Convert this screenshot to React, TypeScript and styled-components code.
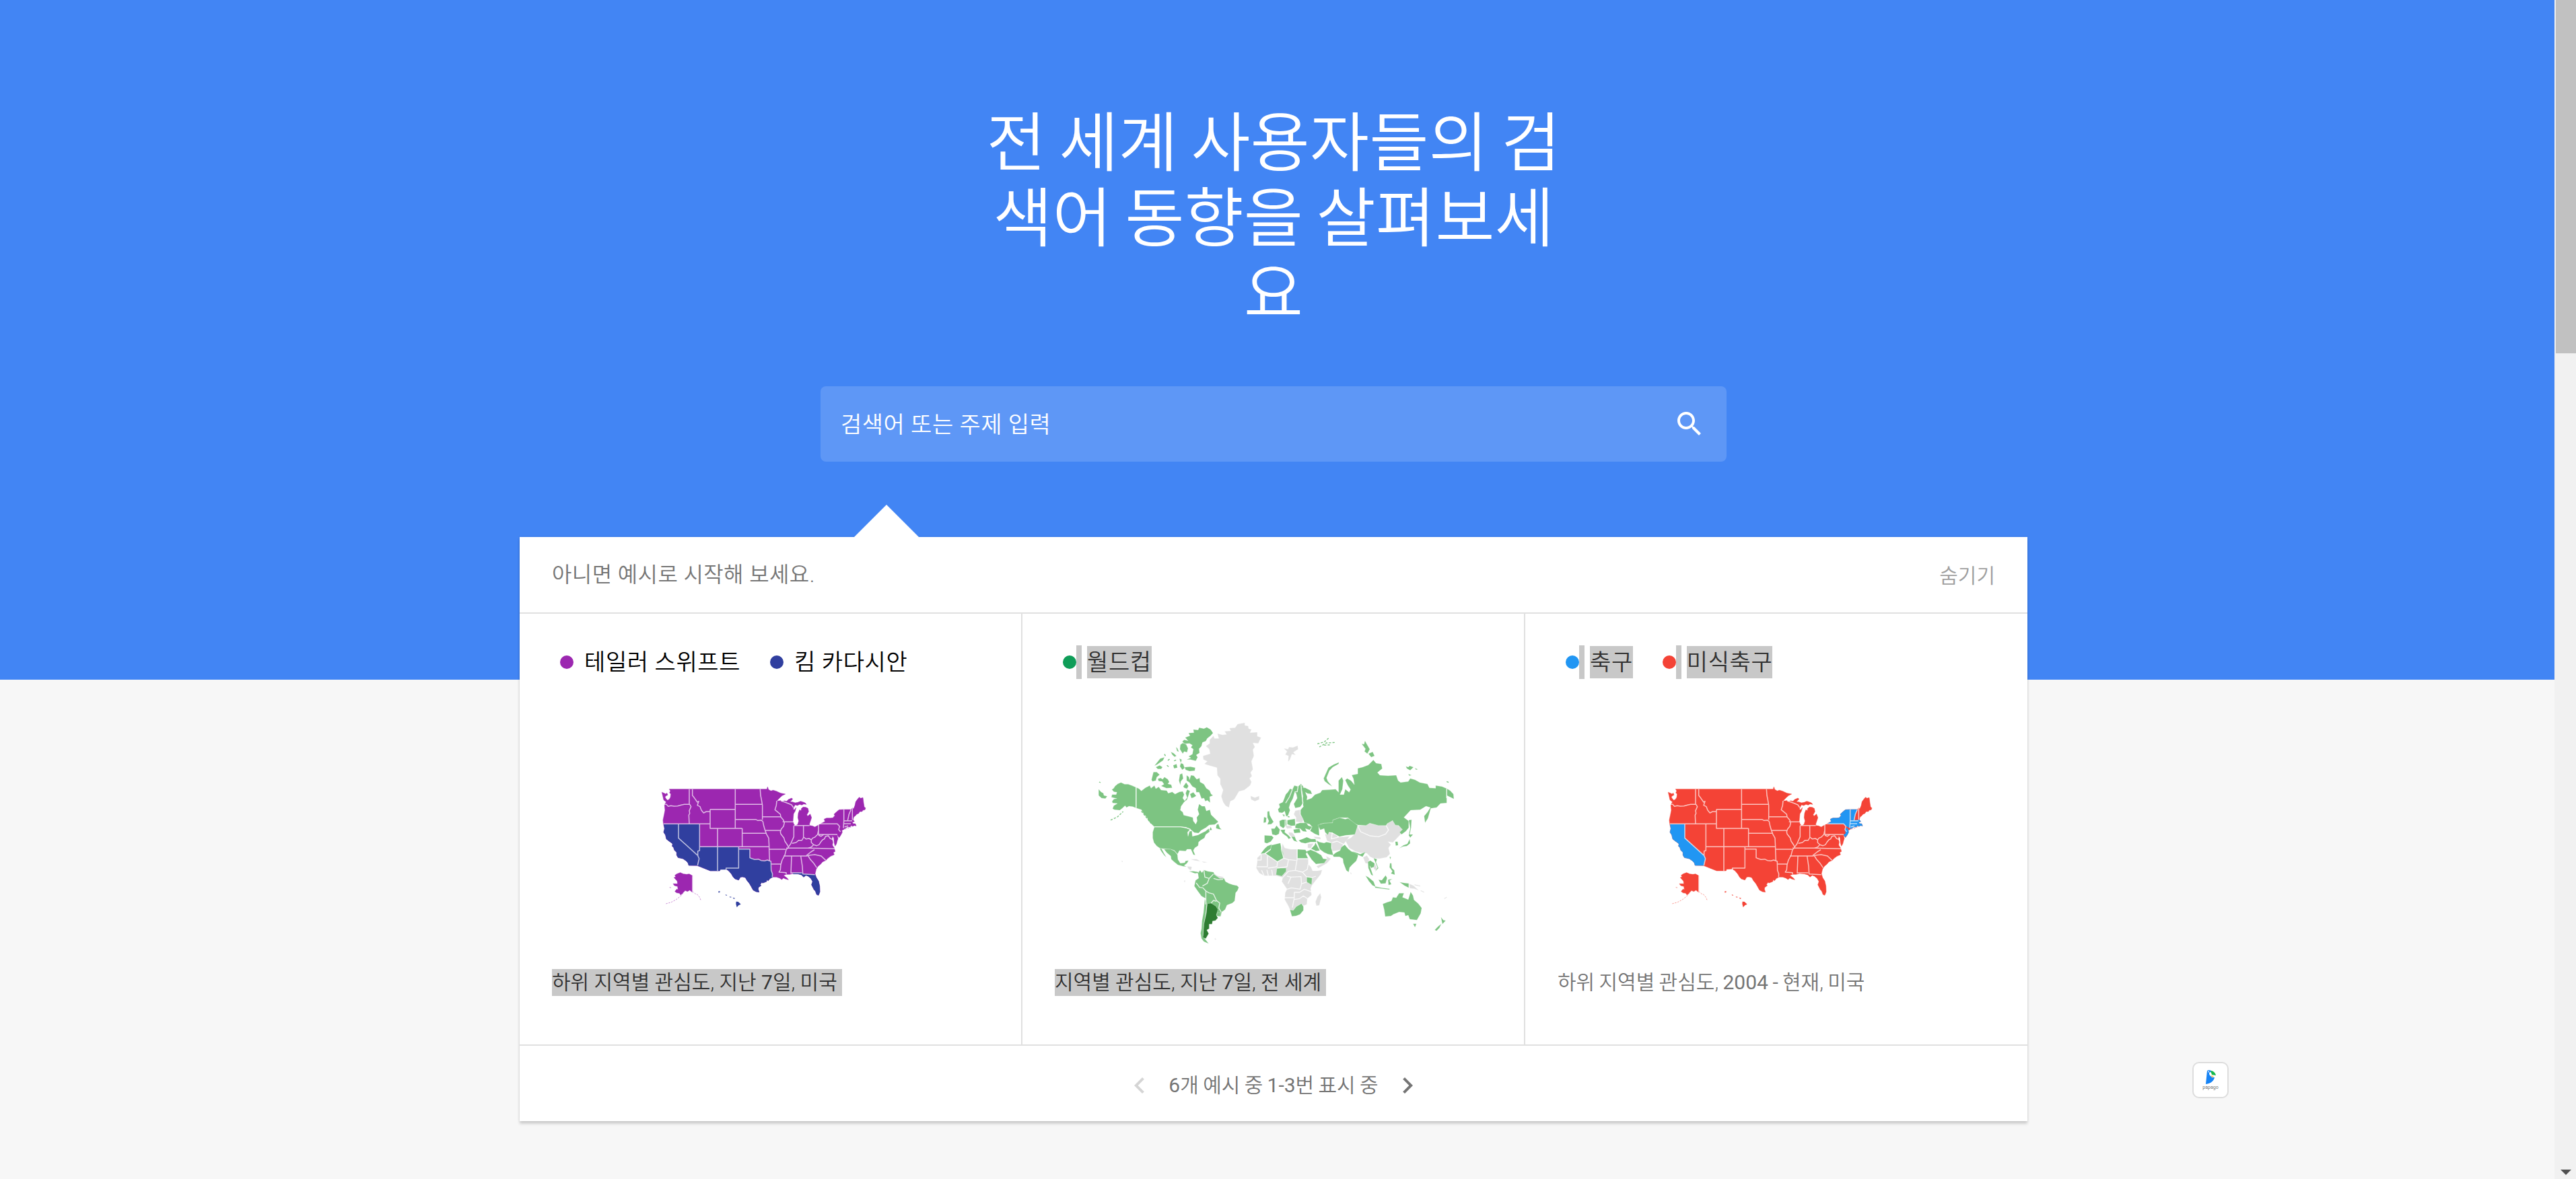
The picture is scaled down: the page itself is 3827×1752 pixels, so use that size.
import React from "react";
import styled, { createGlobalStyle } from "styled-components";

const Global = createGlobalStyle`
  * { box-sizing: border-box; }
  html, body { margin: 0; padding: 0; overflow: hidden; background: #f7f7f7; }
  body { font-family: Roboto, "Noto Sans CJK KR", sans-serif; font-weight: 350; color: #000; }
  button { font: inherit; border: 0; padding: 0; background: none; }
`;

const Screen = styled.div`
  display: flex;
  width: 3827px;
  height: 1752px;
  overflow: hidden;
`;

const Page = styled.main`
  position: relative;
  width: 3795px;
  height: 1752px;
  padding-right: 11px;
  display: flex;
  flex-direction: column;
  align-items: center;
  background: linear-gradient(#4285f4 1010px, #f7f7f7 1010px);
`;

const Title = styled.h1`
  width: 896px;
  height: 336px;
  margin: 157px 0 81px;
  font-size: 96px;
  font-weight: 350;
  line-height: 112px;
  word-spacing: -4px;
  text-align: center;
  color: #fff;
`;

const SearchBox = styled.div`
  width: 1346px;
  height: 112px;
  padding: 0 31px 0 30px;
  display: flex;
  align-items: center;
  justify-content: space-between;
  border-radius: 8px;
  background: #5e97f6;
  color: #fff;
`;

const Placeholder = styled.span`
  margin-top: -4px;
  font-size: 34px;
  letter-spacing: 0.5px;
`;

const Pointer = styled.div`
  width: 96px;
  height: 48px;
  margin-top: 64px;
  margin-left: -1150px;
  background: #fff;
  clip-path: polygon(50% 0, 100% 100%, 0 100%);
`;

const Card = styled.section`
  width: 2240px;
  height: 868px;
  display: flex;
  flex-direction: column;
  background: #fff;
  box-shadow: 0 4px 4px rgba(0, 0, 0, 0.16), 0 0 4px rgba(0, 0, 0, 0.08);
`;

const CardHeader = styled.header`
  height: 114px;
  padding: 0 48px 6px;
  display: flex;
  align-items: center;
  justify-content: space-between;
  border-bottom: 2px solid #e0e0e0;
  font-size: 32px;
  letter-spacing: 0.4px;
  color: #757575;
`;

const HideButton = styled.button`
  margin-top: 4px;
  font-size: 30px;
  color: #9e9e9e;
`;

const Columns = styled.div`
  flex: 1;
  display: grid;
  grid-template-columns: 747px 747px 746px;
`;

const Example = styled.article`
  padding: 46px 48px 0;
  display: flex;
  flex-direction: column;
  border-right: 2px solid #e0e0e0;
  &:last-child { border-right: 0; }
`;

const Legend = styled.div`
  height: 52px;
  padding-left: 12px;
  display: flex;
  align-items: center;
  gap: 44px;
`;

const LegendItem = styled.div`
  display: flex;
  align-items: center;
`;

const Dot = styled.i<{ $color: string }>`
  width: 20px;
  height: 20px;
  border-radius: 50%;
  background: ${(p) => p.$color};
`;

const Gap = styled.i<{ $selected?: boolean }>`
  width: 8px;
  height: 50px;
  margin-right: 8px;
  background: ${(p) => (p.$selected ? "#c8c8c8" : "transparent")};
`;

const Term = styled.span<{ $selected?: boolean }>`
  height: 48px;
  line-height: 48px;
  font-size: 34px;
  letter-spacing: 0.6px;
  white-space: nowrap;
  color: ${(p) => (p.$selected ? "#323232" : "#000")};
  background: ${(p) => (p.$selected ? "#c8c8c8" : "transparent")};
`;

const MapFrame = styled.div<{ $top: number; $left: number }>`
  height: 430px;
  margin: 0 -48px;
  padding: ${(p) => p.$top}px 0 0 ${(p) => p.$left}px;
`;

const Caption = styled.p<{ $selected?: boolean }>`
  align-self: flex-start;
  height: 40px;
  margin: 0;
  line-height: 40px;
  font-size: 30px;
  word-spacing: ${(p) => (p.$selected ? "0" : "-1px")};
  white-space: pre;
  color: ${(p) => (p.$selected ? "#323232" : "#757575")};
  background: ${(p) => (p.$selected ? "#c8c8c8" : "transparent")};
`;

const Digits = styled.span`
  font-weight: 400;
`;

const Pager = styled.footer`
  height: 114px;
  display: flex;
  align-items: center;
  justify-content: center;
  gap: 19px;
  border-top: 2px solid #e0e0e0;
  font-size: 30px;
  word-spacing: -1px;
  color: #757575;
  svg { margin-top: 6px; }
`;

const Papago = styled.div`
  position: absolute;
  left: 3257px;
  top: 1578px;
  width: 54px;
  height: 54px;
  border: 2px solid #ddd;
  border-radius: 10px;
  background: #fff;
  display: flex;
  flex-direction: column;
  align-items: center;
  padding-top: 10px;
`;

const PapagoName = styled.span`
  font-size: 7px;
  font-weight: 400;
  line-height: 8px;
  color: #777;
`;

const Scrollbar = styled.div`
  width: 32px;
  height: 1752px;
  padding-left: 2px;
  display: flex;
  flex-direction: column;
  justify-content: space-between;
  background: #f1f1f1;
`;

const Thumb = styled.div`
  height: 525px;
  background: #c1c1c1;
`;

const ArrowDown = styled.div`
  width: 16px;
  height: 8px;
  margin: 0 0 6px 7px;
  background: #505050;
  clip-path: polygon(0 0, 100% 0, 50% 100%);
`;

const US_COAST = [
  "70,82 80,86 88,90 92,85 96,94 88,98 84,103 88,110 95,118 102,114 108,105 110,90 104,84 108,76 103,68 538,68 541,58 545,70 556,76 566,73 580,77 590,82 600,86 620,90 606,97 598,104 588,114 582,121 592,120 600,119 606,123 616,120 626,122 634,114 648,108 653,112 646,120 641,124 652,125 664,129 676,127 688,122 698,125 708,129 714,136 702,134 694,139 684,136 674,141 664,138 657,150 655,158 661,160 668,150 664,166 657,178 655,198 654,212 658,224 665,231 675,226 680,210 676,195 678,175 684,160 690,165 692,154 700,148 712,149 721,154 724,168 716,182 720,188 731,179 737,195 733,208 728,222 728,230 740,232 752,237 766,229 780,221 797,212 793,202 804,197 820,197 832,196 841,186 837,180 850,168 860,160 881,159 913,159 919,152 924,156 930,142 934,124 944,110 950,104 956,109 966,106 969,130 972,148 978,152 975,160 966,162 962,168 952,168 947,176 938,180 931,188 925,192 922,205 928,212 918,216 923,222 932,222 936,232 928,230 920,234 914,230 908,237 898,236 888,242 880,248 872,252 874,260 868,272 860,284 854,276 850,270 855,288 851,300 848,312 842,322 838,308 836,286 830,276 828,290 832,304 830,318 838,330 842,346 834,350 838,360 822,367 810,376 800,386 786,392 778,402 766,412 758,424 753,445 758,462 768,478 773,500 774,526 768,541 760,538 754,522 748,516 742,504 737,494 742,480 734,466 722,456 712,452 702,460 692,450 678,446 655,444 640,448 626,448 612,452 622,460 628,464 634,472 620,468 612,464 604,471 594,464 580,460 564,460 552,466 544,476 538,472 536,480 520,486 514,484 508,494 512,498 500,506 499,514 503,527 490,525 477,518 468,502 460,488 450,476 442,462 430,459 420,460 412,473 396,468 388,460 380,446 368,432 356,424 330,425 328,432 286,432 228,409 190,408 186,396 176,386 164,378 142,373 136,362 136,350 126,340 122,328 116,322 118,312 108,304 102,300 90,290 86,272 78,260 82,244 77,224 75,206 80,182 84,162 82,140 85,130 90,126 78,116 74,98",
  "206,454 206,528 194,518 184,524 174,520 164,530 154,540 148,532 136,530 128,524 136,514 142,516 140,502 126,498 120,490 140,490 138,478 124,462 132,460 128,452 136,446 152,440 166,446 180,448 192,446",
];
const US_ISLES = "M206,524l12,10 10,4 10,12 5,12M164,532l-12,14 -18,14 -22,12 -28,8M104,506l10,2M886,246l14,-4 14,-6";
const HAWAII = ["401,569 410,570 422,581 412,586 404,595 400,580", "321,524 329,523 328,529 322,529", "353,537 361,541 356,543", "371,547 382,549 374,551", "386,551 396,554 391,558"];

const CALIFORNIA = "79,225 144,225 144,286 230,364 236,378 230,392 229,408 190,408 186,396 176,386 164,378 142,373 136,362 136,350 126,340 122,328 116,322 118,312 108,304 102,300 90,290 86,272 78,260 82,244";
const NEVADA = "144,225 238,225 238,342 230,342 230,364 144,286";
const ARIZONA = "239,326 318,326 318,432 286,432 229,409 236,378 230,364 230,342 239,342";
const NEW_MEXICO = "318,326 412,326 412,420 356,420 356,426 330,426 328,432 318,432";
const TEXAS = "412,335 462,335 462,374 480,380 500,384 520,388 540,386 556,392 557,430 563,445 564,460 552,466 544,476 538,472 536,480 520,486 514,484 508,494 512,498 500,506 499,514 503,527 490,525 477,518 468,502 460,488 450,476 442,462 430,459 420,460 412,473 396,468 388,460 380,446 368,432 356,424 356,420 412,420";
const FLORIDA = "655,441 694,441 698,446 752,449 758,462 768,478 773,500 774,526 768,541 760,538 754,522 748,516 742,504 737,494 742,480 734,466 722,456 712,452 702,460 692,450 678,446 655,446";
const NEW_YORK = "797,212 793,202 804,197 820,197 832,196 841,186 837,180 850,168 860,160 882,159 882,208 880,240 872,238 862,232 852,223 780,223";
const VERMONT = "884,159 913,159 904,180 898,208 884,208";
const SOUTHERN_NE = "882,208 922,205 928,212 918,216 923,222 932,222 936,232 928,230 920,234 914,230 908,237 898,236 882,246";
const NEW_JERSEY = "862,240 872,246 874,260 868,272 860,282 852,273 862,264 858,250";

const US_BORDERS =
  "M192,68V138M80,134L90,136 98,145 110,142 124,144 140,143 156,139 170,136 194,136 200,146 192,164 194,176 190,184 192,222" +
  "M206,68V96L214,106 228,126 234,122 228,140 240,146 246,162 256,174 268,168 284,168" +
  "M77,223H285M285,158V243H428M285,158H397M397,68V243M397,136H517M508,68L510,96 514,116 518,140 518,204M397,203L488,203 498,208 512,206 520,212" +
  "M518,191H600M582,120L580,140 574,160 586,170 598,180 600,192 612,206 616,218 612,234 602,246 598,258 600,268 614,286 618,300 630,318 634,328 624,338 618,362 606,384 600,404 598,428 592,438 624,440 624,448" +
  "M520,212L524,232 530,252 536,268 546,286 548,324V336L550,386M530,252H598M428,265H536M428,243V324M318,243V432M238,225V342L230,344V364L236,378 229,408" +
  "M238,325H548M144,225V286L230,364M412,326V420H356V426M412,335H462V374L472,378 484,382 500,380 512,386 528,388 540,384 556,390 557,430 563,446 562,460M548,336H622M556,402H600" +
  "M608,214H656M600,120L618,126 634,132 648,138 656,150M658,230H728M658,232V280L650,298 644,312 634,326M701,232V282M624,331H720L842,334" +
  "M612,366H714L730,362 752,360 780,366 800,385M648,366L645,444M689,366L696,412 698,446 752,449M645,441H694M722,366L732,382 748,400 760,418M714,364L734,348 750,338" +
  "M650,310L668,306 680,296 694,296 702,282 712,290 726,288 736,294 742,286 752,282 764,270 768,250M768,223V270H852M768,223H852L862,234 858,248 866,258M736,294L736,306 746,316 736,326 720,332" +
  "M746,316L760,320 770,316 778,304 786,294 794,290 800,278 812,276 820,288 830,292M768,274L780,278 792,270M881,159V210L879,242M913,159L904,180 898,208M919,152V205M882,209H918M882,222H912M884,236L900,232";

type UsVariant = { land: string; accent: string; accents: string[]; hawaii: string };

function UsMap({ land, accent, accents, hawaii }: UsVariant) {
  return (
    <svg width="350" height="220" viewBox="0 0 1050 660">
      {US_COAST.map((p) => <polygon key={p} points={p} fill={land} stroke={land} strokeWidth="1.5" strokeLinejoin="round" />)}
      <path d={US_ISLES} fill="none" stroke={land} strokeWidth="2.5" strokeDasharray="7 5" opacity=".65" />
      {accents.map((p) => <polygon key={p} points={p} fill={accent} stroke={accent} strokeWidth="1.5" strokeLinejoin="round" />)}
      {HAWAII.map((p) => <polygon key={p} points={p} fill={hawaii} />)}
      <path d={US_BORDERS} fill="none" stroke="#fff" strokeOpacity=".68" strokeWidth="4.5" strokeLinejoin="round" />
      <path d="M206,454V528" stroke="#fff" strokeOpacity=".6" strokeWidth="3" />
    </svg>
  );
}

const GREEN = [
  "130,325 142,314 155,308 170,316 185,316 200,322 218,330 218,422 204,416 188,414 178,420 172,412 160,424 150,432 128,430 120,425 125,412 140,402 120,400 118,392 126,382 138,380 115,374 118,362 135,362 138,352 126,350 117,340 125,334",
  "218,330 230,336 240,346 256,332 275,322 280,334 294,322 300,336 312,328 322,342 345,344 352,356 368,350 380,360 398,350 412,348 418,362 412,378 420,390 430,376 424,356 430,340 442,346 436,366 430,385 418,395 405,415 402,432 412,440 416,454 438,460 454,464 456,480 466,494 472,480 470,464 480,450 474,430 480,404 492,414 504,414 510,435 525,430 530,452 545,468 560,484 545,496 522,498 508,510 488,522 478,534 460,532 442,515 425,508 294,506 280,492 270,480 262,462 250,450 240,430 218,422",
  "294,506 403,506 425,510 444,516 432,530 434,548 440,526 450,524 452,548 476,542 490,534 506,526 520,514 524,528 508,540 502,556 486,566 478,574 476,590 462,600 456,612 464,632 456,630 446,606 430,606 424,614 398,612 390,628 378,612 362,606 345,605 318,602 304,592 292,576 287,556 287,530",
  "334,606 345,605 362,606 378,614 390,630 392,652 402,668 420,666 424,658 436,656 430,668 418,678 428,684 412,682 392,676 376,662 364,650 362,636 346,622",
  "316,602 324,604 334,624 344,642 334,632 322,614",
  "422,108 442,100 436,88 458,86 456,72 476,74 480,64 500,68 512,62 528,72 538,88 528,100 514,112 508,124 494,130 490,146 480,158 482,176 468,186 474,196 466,212 444,206 428,206 446,198 436,192 452,182 456,160 446,152 452,142 440,134 420,136 410,126 418,118 434,122",
  "402,140 412,132 426,138 434,156 430,174 418,170 412,180 400,160",
  "362,172 374,178 386,190 378,194 368,184",
  "384,150 390,156 396,172 388,168",
  "290,262 304,262 316,274 304,284 300,300 286,304 282,296",
  "308,292 320,288 328,294 336,284 350,294 356,306 350,314 364,318 368,332 344,334 322,324 334,316 326,304 312,302",
  "398,202 408,206 404,222 414,226 420,244 410,252 400,236 404,222",
  "420,240 444,238 464,242 462,256 440,258 424,252",
  "372,232 386,226 390,242 376,246",
  "318,202 336,196 330,210 322,216 306,228 294,234",
  "300,240 316,232 328,240 322,248 308,248",
  "400,272 410,268 414,290 404,304 402,320 396,300",
  "414,326 426,308 436,324 430,336 418,332",
  "428,276 438,284 440,296 446,276 458,278 470,294 482,288 484,306 500,316 510,334 524,344 530,360 538,366 524,372 526,398 514,388 506,392 500,378 490,380 480,352 468,352 466,334 452,326 440,308 428,300",
  "442,360 456,352 468,368 456,376 448,378",
  "528,506 534,520 522,522", "552,498 560,492 566,510 574,518 560,516 550,512",
  "484,700 492,710 500,698 516,704 540,708 545,720 566,736 584,736 590,750 604,758 620,764 638,768 645,776 640,790 632,800 628,836 618,846 596,855 588,875 574,886 570,905 556,902 550,868 530,846 508,852 508,826 490,815 476,795 460,770 465,745 478,735 475,712",
  "504,826 512,850 508,890 500,940 496,990 504,1005 520,1027 500,1018 490,1004 486,980 490,960 492,925 498,890",
  "62,338 72,350 82,356 84,366 98,370 90,380 74,378 62,366",
  "812,404 828,396 834,380 840,362 850,350 858,336 868,340 876,322 892,326 904,314 914,328 908,350 910,380 914,398 900,418 880,422 874,404 888,378 884,358 878,350 870,380 860,400 854,420 858,432 850,456 842,460 836,436 826,444 812,442 808,428 816,418",
  "906,330 922,332 944,344 950,360 932,358 922,352 930,372 928,386 948,378 962,362 984,354 992,342 1030,340 1048,338 1060,352 1060,300 1074,284 1080,300 1076,338 1066,362 1082,362 1088,338 1104,352 1110,340 1098,320 1088,298 1096,290 1112,300 1126,318 1122,292 1115,275 1140,270 1140,245 1160,240 1184,230 1205,208 1216,222 1238,226 1242,246 1222,264 1232,276 1266,278 1300,276 1308,300 1318,308 1350,304 1358,290 1378,296 1398,308 1430,315 1438,332 1464,334 1464,322 1490,326 1510,335 1524,344 1538,360 1540,382 1510,366 1510,400 1484,402 1468,420 1444,424 1440,438 1432,468 1420,488 1416,458 1430,440 1442,420 1424,414 1400,430 1360,432 1332,464 1352,480 1352,510 1340,526 1322,540 1314,530 1326,518 1310,500 1296,498 1285,478 1262,492 1258,500 1226,500 1190,490 1174,500 1140,498 1122,490 1100,466 1065,465 1036,476 1036,488 1000,490 984,494 978,510 980,545 962,538 942,524 950,506 940,494 918,488 912,470 902,450 902,430 914,416 908,390 912,370",
  "1062,218 1060,226 1036,240 1022,256 1010,288 1016,304 1034,326 1018,316 1002,302 998,290 1008,266 1018,242 1040,228",
  "1156,136 1166,138 1170,122 1178,138 1190,160 1180,180 1168,170 1172,158", "1184,180 1202,172 1210,190 1196,196",
  "1340,236 1350,240 1356,234 1372,240 1358,254 1344,246", "1378,244 1390,250 1382,252", "1350,270 1364,276 1354,278",
  "974,498 1000,490 1036,488 1036,476 1065,465 1088,472 1100,468 1140,500 1128,540 1110,542 1090,544 1064,550 1034,532 1020,530 1016,542 1004,530 1000,514 984,520",
  "1352,476 1364,474 1362,510 1356,540 1370,540 1358,554 1352,544 1358,512",
  "1356,560 1358,580 1344,592 1328,594 1312,602 1330,588 1346,582", "1296,572 1306,572 1308,588 1298,590",
  "968,566 980,574 1000,578 1010,574 1030,578 1030,600 1038,632 1016,628 1000,620 982,606",
  "1036,632 1050,620 1066,612 1072,596 1086,586 1100,604 1114,616 1142,624 1140,640 1134,658 1116,676 1106,688 1102,708 1092,700 1080,666 1078,648 1064,640 1040,640",
  "1118,614 1150,628 1172,618 1160,640 1140,630",
  "926,616 944,608 966,618 988,632 996,648 1012,650 1000,668 966,672 948,652",
  "946,604 960,588 964,576 982,612 966,614",
  "894,566 910,560 928,552 946,560 964,560 968,574 944,574 922,580 904,576",
  "752,544 782,546 790,554 778,572 762,580 752,576", "780,514 794,514 802,500 816,518 812,538 800,544 784,540",
  "814,480 826,474 842,474 844,498 830,512 816,502", "846,476 880,470 882,500 864,502 846,494",
  "880,494 900,488 926,488 934,500 950,506 940,520 922,514 928,528 912,526 900,514 880,512", "872,518 898,514 902,532 876,534",
  "818,520 838,518 836,530 852,544 862,556 852,560 846,550 828,536",
  "764,438 772,436 774,454 782,470 790,484 780,494 764,496 770,480 764,464", "750,462 760,466 758,486 748,488",
  "834,462 826,450 836,452", "864,550 878,550 884,566 890,574 874,568",
  "764,592 782,584 778,604 752,624 736,626 752,604", "780,588 818,578 822,600 830,622 832,646 806,662 756,626 778,608",
  "888,606 922,608 930,620 924,626 934,648 888,648", "804,690 842,690 842,704 824,726 800,720", "928,730 950,732 948,764 928,752",
  "858,876 872,878 884,862 906,848 914,862 914,878 900,896 884,903 866,905",
  "1182,662 1192,656 1210,668 1208,684 1196,690 1190,680 1204,724 1196,720 1184,690", "1206,646 1220,650 1216,664 1226,690 1212,706 1222,688",
  "1172,724 1186,732 1206,750 1214,774 1200,766 1186,748", "1226,742 1240,744 1256,722 1262,734 1256,758 1236,760",
  "1266,742 1284,738 1272,746 1280,762 1268,766", "1212,772 1240,778 1272,782 1272,786 1212,778",
  "1274,668 1280,668 1282,690 1292,700 1294,720 1278,714 1284,704 1272,686", "1272,640 1278,640 1276,652",
  "1314,752 1332,756 1352,758 1352,778 1334,768",
  "1244,850 1262,842 1280,836 1286,820 1300,822 1312,802 1332,802 1326,820 1350,830 1360,796 1370,812 1374,832 1392,848 1406,868 1402,892 1386,922 1356,918 1350,900 1338,904 1334,888 1312,886 1288,896 1278,904 1254,906 1250,876",
  "1370,938 1384,938 1378,954", "1486,908 1496,922 1506,924 1492,940", "1488,938 1480,956 1468,970 1460,966 1474,950",
  "438,704 458,704 480,708 464,714", "556,888 572,890 566,906 552,902",
];

const GREY = [
  "496,190 526,180 522,160 508,146 524,134 524,118 540,100 544,112 562,112 556,90 578,96 594,94 586,80 612,78 606,66 630,64 640,48 670,42 670,54 684,56 686,68 698,72 692,86 722,84 722,102 738,108 726,134 704,132 712,150 704,162 708,190 698,214 704,250 694,264 700,280 690,290 698,306 692,322 668,342 646,348 636,366 626,384 610,392 604,420 590,412 580,396 572,370 580,342 568,316 568,292 556,276 554,242 526,234 502,226 514,214 498,206",
  "694,368 712,376 730,368 730,384 712,392 696,384",
  "832,156 850,160 854,150 870,152 890,144 892,160 872,174 882,186 866,182 858,206 850,216 852,190 838,184 846,170",
  "826,578 836,600 860,606 888,606 888,648 934,648 934,672 946,686 952,702 972,702 992,698 986,718 966,744 950,766 944,780 948,810 930,826 928,852 914,858 906,848 884,862 872,878 858,876 852,860 836,830 838,800 846,784 832,762 824,750 828,732 800,724 786,724 750,724 730,712 718,690 722,662 722,644 738,628 756,626 806,662 832,646 822,606",
  "984,802 988,820 980,856 968,858 964,840 972,818",
  "1088,566 1110,556 1126,540 1140,502 1174,500 1190,490 1226,500 1258,500 1270,484 1285,478 1300,496 1328,514 1318,540 1300,560 1286,576 1266,572 1278,586 1268,600 1274,626 1260,642 1230,648 1204,646 1192,640 1178,624 1150,622 1130,616 1104,600",
  "1004,540 1022,532 1046,540 1060,552 1106,548 1096,564 1080,584 1066,610 1034,614 1030,576 1012,568",
  "968,682 996,668 1012,648 1008,636 1028,648 1012,668 976,690", "880,434 900,430 900,450 914,472 910,486 882,484 884,466 874,450",
  "838,502 862,500 868,512 846,514", "852,530 868,532 880,548 866,552 854,540", "932,582 956,580 944,602 932,600", "956,550 984,552 986,562 964,558",
  "1162,642 1178,634 1188,650 1182,670 1172,668", "1198,664 1212,672 1222,694 1212,700 1204,686",
  "1354,760 1372,768 1394,790 1376,782 1356,780", "546,716 556,724 582,730 576,742 556,742 544,734", "430,682 450,684 446,700 436,694",
  "444,650 470,650 486,660 462,656", "490,660 516,664 500,666", "1108,708 1114,712 1112,720",
];

const ARGENTINA = "514,848 530,846 550,860 558,874 552,900 558,912 548,924 536,926 534,940 522,940 522,960 512,966 520,982 508,1004 496,1000 500,940 510,890";

const WORLD_BORDERS =
  "M218,330V422M294,506H403L425,510 444,518M1510,335V378M892,326L888,350 878,350M904,318L906,350 912,400 902,430M868,340L856,372 840,400" +
  "M508,852L508,792 496,778 482,776 468,756M508,792L520,800 540,806 552,834 566,846 562,868 572,886M500,700L504,730 522,736 514,758 494,770M522,736L540,716M540,736L560,742 580,740M530,846L540,834 552,838" +
  "M888,606V648H934M826,578L822,606 832,646 806,662 756,626M722,654H738V628M764,636V684L722,684M806,662L804,684 766,690M832,646L852,652 846,684 804,690M888,648L880,700 852,704 828,732M852,652L884,656M880,700L910,708 930,696 934,672M910,708L926,728 950,732 966,726M862,730L904,728 906,760 900,784 864,778 846,784M836,822H876V798H898L918,784 948,796M876,822L868,866M876,830L898,826 914,814 930,826M846,726L862,730 850,760M740,700L750,724M762,698L768,724M782,698L786,724M906,760L928,752" +
  "M1140,502L1152,528 1190,546 1226,550 1256,538 1268,520 1258,500M1034,576L1054,570 1080,584M1034,532L1030,560 1060,552M838,476V516M845,474V500M880,470L882,500M866,502L872,534";

function WorldMap() {
  return (
    <svg width="560" height="350" viewBox="0 0 1568 1050" preserveAspectRatio="none">
      <g stroke="#fff" strokeOpacity=".5" strokeWidth="1.5" strokeLinejoin="round">
        {GREY.map((p) => <polygon key={p} points={p} fill="#e0e0e0" />)}
        {GREEN.map((p) => <polygon key={p} points={p} fill="#7dc482" />)}
        <polygon points={ARGENTINA} fill="#2e7d32" />
      </g>
      <path d={WORLD_BORDERS} fill="none" stroke="#fff" strokeOpacity=".8" strokeWidth="4" strokeLinejoin="round" />
      <path
        d="M112,476L140,462 164,438M240,436L262,466 280,490M972,136L1000,128 1022,108M980,150L1010,132 1046,130M1000,142L1030,140M336,182L340,190M350,210L360,202M376,212L390,206M346,232L356,240M1510,304L1518,308M64,306L70,309M848,460L856,462M452,706L480,712"
        fill="none" stroke="#7dc482" strokeWidth="4" strokeDasharray="9 6"
      />
      <path d="M1376,764L1400,770M1402,790L1416,798M1500,826L1510,820M545,1004L550,1008M420,745V752M158,658L162,662" fill="none" stroke="#e0e0e0" strokeWidth="3" />
    </svg>
  );
}

type Entry = { name: string; color: string };

function LegendRow({ entries, selected }: { entries: Entry[]; selected?: boolean }) {
  return (
    <Legend>
      {entries.map((e) => (
        <LegendItem key={e.name}>
          <Dot $color={e.color} />
          <Gap $selected={selected} />
          <Term $selected={selected}>{e.name}</Term>
        </LegendItem>
      ))}
    </Legend>
  );
}

const Icon = ({ d, size, color }: { d: string; size: number; color: string }) => (
  <svg width={size} height={size} viewBox="0 0 24 24" fill={color}><path d={d} /></svg>
);

export default function App() {
  return (
    <Screen>
      <Global />
      <Page>
        <Title>전 세계 사용자들의 검색어 동향을 살펴보세요</Title>
        <SearchBox>
          <Placeholder>검색어 또는 주제 입력</Placeholder>
          <Icon size={48} color="#fff" d="M15.5 14h-.79l-.28-.27C15.41 12.59 16 11.11 16 9.5 16 5.91 13.09 3 9.5 3S3 5.91 3 9.5 5.91 16 9.5 16c1.61 0 3.09-.59 4.23-1.57l.27.28v.79l5 4.99L20.49 19l-4.99-5zm-6 0C7.01 14 5 11.99 5 9.5S7.01 5 9.5 5 14 7.01 14 9.5 11.99 14 9.5 14z" />
        </SearchBox>
        <Pointer />
        <Card>
          <CardHeader>
            <span>아니면 예시로 시작해 보세요.</span>
            <HideButton>숨기기</HideButton>
          </CardHeader>
          <Columns>
            <Example>
              <LegendRow entries={[{ name: "테일러 스위프트", color: "#9c27b0" }, { name: "킴 카다시안", color: "#303f9f" }]} />
              <MapFrame $top={140} $left={188}>
                <UsMap land="#9c27b0" accent="#303f9f" accents={[CALIFORNIA, NEVADA, ARIZONA, NEW_MEXICO, TEXAS, FLORIDA]} hawaii="#303f9f" />
              </MapFrame>
              <Caption $selected>하위 지역별 관심도, 지난 <Digits>7</Digits>{"일, 미국 "}</Caption>
            </Example>
            <Example>
              <LegendRow selected entries={[{ name: "월드컵", color: "#0f9d58" }]} />
              <MapFrame $top={50} $left={91}><WorldMap /></MapFrame>
              <Caption $selected>지역별 관심도, 지난 <Digits>7</Digits>{"일, 전 세계 "}</Caption>
            </Example>
            <Example>
              <LegendRow selected entries={[{ name: "축구", color: "#2196f3" }, { name: "미식축구", color: "#f44336" }]} />
              <MapFrame $top={140} $left={189}>
                <UsMap land="#f44336" accent="#2196f3" accents={[CALIFORNIA, NEW_YORK, VERMONT, SOUTHERN_NE, NEW_JERSEY]} hawaii="#f44336" />
              </MapFrame>
              <Caption>하위 지역별 관심도, <Digits>2004 -</Digits> 현재, 미국</Caption>
            </Example>
          </Columns>
          <Pager>
            <Icon size={48} color="#d5d5d5" d="M15.41 7.41L14 6l-6 6 6 6 1.41-1.41L10.83 12z" />
            <span><Digits>6</Digits>개 예시 중 <Digits>1-3</Digits>번 표시 중</span>
            <Icon size={48} color="#757575" d="M10 6L8.59 7.41 13.17 12l-4.58 4.59L10 18l6-6z" />
          </Pager>
        </Card>
        <Papago>
          <svg width="16" height="22" viewBox="0 0 16 22">
            <path d="M3 1c2-1 4-1 6 0 0 3-1 5 0 7 1 3 3 3 5 3-1 5-5 9-13 10z" fill="#1683f5" />
            <path d="M6 4c0 4 2 6 6 6l1-2-5-5z" fill="#fff" />
            <path d="M8 1c4 0 7 3 8 7l-6-1z" fill="#15b84a" />
            <path d="M9 8l4 1-3 3z" fill="#ffc46b" />
            <circle cx="5" cy="2.6" r=".9" fill="#fff" />
          </svg>
          <PapagoName>papago</PapagoName>
        </Papago>
      </Page>
      <Scrollbar>
        <Thumb />
        <ArrowDown />
      </Scrollbar>
    </Screen>
  );
}
